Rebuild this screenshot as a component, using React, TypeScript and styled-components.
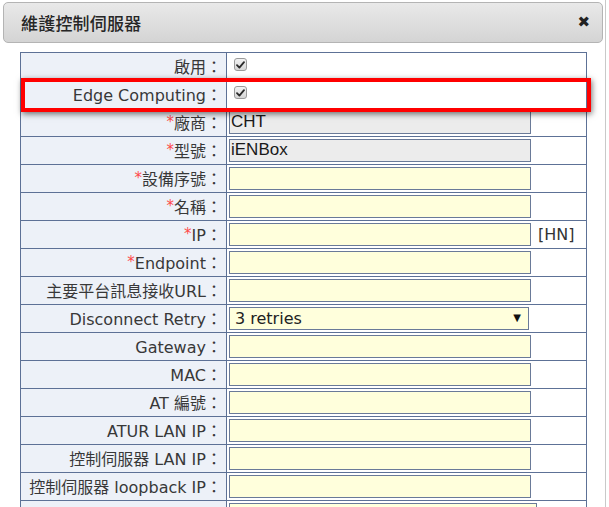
import React from "react";
import styled, { createGlobalStyle } from "styled-components";

const GlobalStyle = createGlobalStyle`
  html, body {
    margin: 0;
    padding: 0;
    background: #ffffff;
  }
  body {
    font-family: "DejaVu Sans", "Noto Sans CJK TC", sans-serif;
    overflow: hidden;
  }
`;

const Page = styled.div`
  width: 606px;
  height: 507px;
  box-sizing: border-box;
  border-right: 1px solid #c9c9c9;
  padding: 2px 0 0 3px;
  display: flex;
  flex-direction: column;
  overflow: hidden;
`;

const TitleBar = styled.div`
  flex-shrink: 0;
  width: 600px;
  height: 41px;
  box-sizing: border-box;
  border: 1px solid #b4b4b4;
  border-radius: 5px;
  background: linear-gradient(to bottom, #e9e9e9 0%, #d4d4d4 100%);
  display: flex;
  align-items: center;
  justify-content: space-between;
  padding: 0 12px 0 17px;
`;

const Title = styled.span`
  font-family: "Noto Sans CJK TC", sans-serif;
  font-size: 17px;
  font-weight: 500;
  color: #262626;
  letter-spacing: 0.2px;
`;

const CloseButton = styled.span`
  font-family: "DejaVu Sans", sans-serif;
  font-size: 15px;
  color: #222;
  line-height: 1;
`;

const FormWrap = styled.div`
  flex-shrink: 0;
  position: relative;
  margin: 9px 0 0 17px;
  width: 567px;
`;

const FormGrid = styled.div`
  display: grid;
  grid-template-columns: 206px 360px;
  border-top: 1px solid #5d7196;
  border-left: 1px solid #5d7196;
`;

const LabelCell = styled.div`
  box-sizing: border-box;
  height: 28px;
  background: #edf1f8;
  border-right: 1px solid #5d7196;
  border-bottom: 1px solid #5d7196;
  text-align: right;
  padding: 0 4px 0 0;
  font-size: 16px;
  color: #383838;
  white-space: nowrap;
  line-height: 27px;
`;

const ValueCell = styled.div`
  box-sizing: border-box;
  height: 28px;
  background: #ffffff;
  border-right: 1px solid #5d7196;
  border-bottom: 1px solid #5d7196;
  display: flex;
  align-items: center;
  padding-left: 2px;
  font-size: 16px;
  color: #333;
  white-space: nowrap;
`;

const Star = styled.span`
  color: #ff4a4a;
  font-size: 15px;
  position: relative;
  top: -2px;
`;

const Colon = styled.span`
  font-family: "Noto Sans CJK TC", sans-serif;
`;

const TextInput = styled.input<{ $readonly?: boolean; $wide?: boolean }>`
  width: ${(p) => (p.$wide ? "308px" : "302px")};
  height: 23px;
  box-sizing: border-box;
  border: 1px solid #6a7a98;
  background: ${(p) => (p.$readonly ? "#ececec" : "#ffffdc")};
  font-family: "Liberation Sans", sans-serif;
  font-size: 17px;
  color: #1a1a1a;
  padding: 0 1px;
  margin: 0 0 1px 0;
  outline: none;
`;

const Suffix = styled.span`
  margin-left: 7px;
`;

const SelectWrap = styled.span`
  position: relative;
  display: inline-block;
  margin-bottom: 1px;
`;

const Select = styled.select`
  appearance: none;
  -webkit-appearance: none;
  width: 300px;
  height: 23px;
  box-sizing: border-box;
  border: 1px solid #6a7a98;
  border-radius: 0;
  background: #ffffdc;
  font-family: "DejaVu Sans", sans-serif;
  font-size: 16px;
  color: #222;
  padding: 0 0 0 5px;
  margin: 0;
  outline: none;
  display: block;
`;

const Arrow = styled.span`
  position: absolute;
  right: 8px;
  top: 6px;
  font-size: 10px;
  color: #111;
  pointer-events: none;
  line-height: 1;
`;

const CheckBox = styled.span`
  display: inline-flex;
  align-items: center;
  justify-content: center;
  width: 13px;
  height: 13px;
  box-sizing: border-box;
  margin: 0 0 4px 5px;
  border: 1px solid #9a9a9a;
  border-radius: 3px;
  background: linear-gradient(to bottom, #f2f2f2, #d6d6d6);
`;

const Highlight = styled.div`
  position: absolute;
  left: 1px;
  top: 26px;
  width: 570px;
  height: 34px;
  box-sizing: border-box;
  border: 4px solid #ff0000;
  box-shadow: 1px 2px 6px rgba(0, 0, 0, 0.55);
  pointer-events: none;
`;

type Field =
  | { label: string; required?: boolean; kind: "check" }
  | { label: string; required?: boolean; kind: "text"; value?: string; readonly?: boolean; suffix?: string; wide?: boolean }
  | { label: string; required?: boolean; kind: "select"; value: string };

const fields: Field[] = [
  { label: "啟用", kind: "check" },
  { label: "Edge Computing", kind: "check" },
  { label: "廠商", required: true, kind: "text", value: "CHT", readonly: true },
  { label: "型號", required: true, kind: "text", value: "iENBox", readonly: true },
  { label: "設備序號", required: true, kind: "text" },
  { label: "名稱", required: true, kind: "text" },
  { label: "IP", required: true, kind: "text", suffix: "[HN]" },
  { label: "Endpoint", required: true, kind: "text" },
  { label: "主要平台訊息接收URL", kind: "text" },
  { label: "Disconnect Retry", kind: "select", value: "3 retries" },
  { label: "Gateway", kind: "text" },
  { label: "MAC", kind: "text" },
  { label: "AT 編號", kind: "text" },
  { label: "ATUR LAN IP", kind: "text" },
  { label: "控制伺服器 LAN IP", kind: "text" },
  { label: "控制伺服器 loopback IP", kind: "text" },
  { label: "", kind: "text", wide: true },
];

const Check = () => (
  <CheckBox>
    <svg width="9" height="8" viewBox="0 0 9 8">
      <path d="M1 4.2 L3.4 6.6 L8 1.2" fill="none" stroke="#2a2a2a" strokeWidth="1.8" strokeLinecap="round" strokeLinejoin="round" />
    </svg>
  </CheckBox>
);

export default function App() {
  return (
    <>
      <GlobalStyle />
      <Page>
        <TitleBar>
          <Title>維護控制伺服器</Title>
          <CloseButton>✖</CloseButton>
        </TitleBar>
        <FormWrap>
          <FormGrid>
            {fields.map((f, i) => (
              <React.Fragment key={i}>
                <LabelCell>
                  {f.required && <Star>*</Star>}
                  {f.label}
                  {f.label && <Colon>：</Colon>}
                </LabelCell>
                <ValueCell>
                  {f.kind === "check" && <Check />}
                  {f.kind === "text" && (
                    <>
                      <TextInput
                        $readonly={f.readonly}
                        $wide={f.wide}
                        readOnly={f.readonly}
                        defaultValue={f.value ?? ""}
                      />
                      {f.suffix && <Suffix>{f.suffix}</Suffix>}
                    </>
                  )}
                  {f.kind === "select" && (
                    <SelectWrap>
                      <Select defaultValue={f.value}>
                        <option>1 retries</option>
                        <option>2 retries</option>
                        <option>3 retries</option>
                        <option>5 retries</option>
                      </Select>
                      <Arrow>▼</Arrow>
                    </SelectWrap>
                  )}
                </ValueCell>
              </React.Fragment>
            ))}
          </FormGrid>
          <Highlight />
        </FormWrap>
      </Page>
    </>
  );
}
